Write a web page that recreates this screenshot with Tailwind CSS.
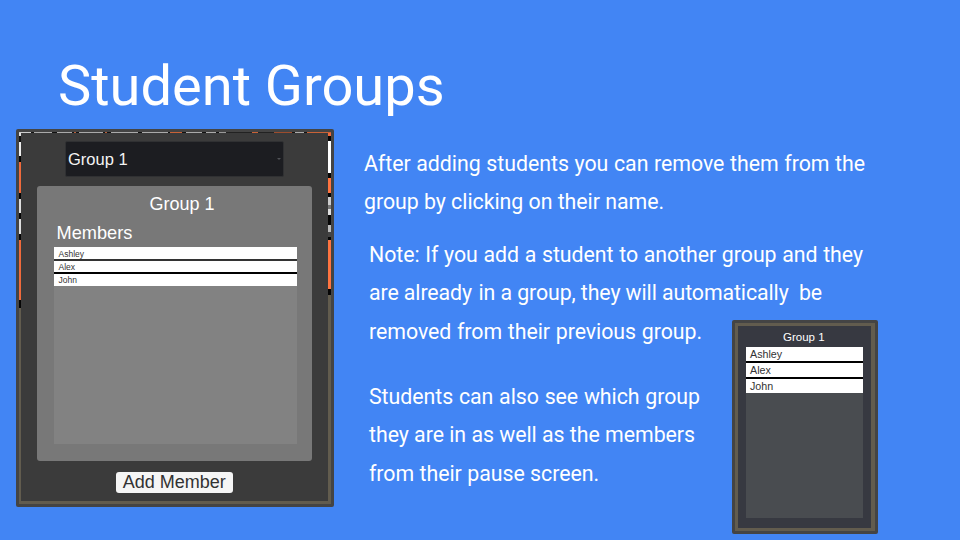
<!DOCTYPE html>
<html lang="en">
<head>
<meta charset="utf-8">
<title>Student Groups</title>
<script src="https://cdn.jsdelivr.net/npm/@tailwindcss/browser@4"></script>
</head>
<body class="h-[540px] w-[960px] overflow-hidden bg-[#4285f4]">
<main class="relative flex h-[540px] w-[960px] flex-col overflow-hidden bg-[#4285f4] font-['Roboto',sans-serif] text-white">
  <h1 class="h-[129px] pt-[53px] pl-[58px] text-[56px] leading-[66px] whitespace-nowrap">Student Groups</h1>
  <div class="flex pl-4">
    <!-- Group editor window -->
    <section class="relative flex h-[378px] w-[318px] shrink-0 flex-col rounded-[2px] bg-[#444444] p-[3px] font-['Liberation_Sans',sans-serif]">
      <div class="h-px bg-[linear-gradient(90deg,#ccc_0_12px,#111_12px_15px,#aaa_15px_33px,#111_33px_38px,#aaa_38px_53px,#111_53px_55px,#b85c38_55px_57px,#111_57px_60px,#aaa_60px_84px,#111_84px_86px,#b85c38_86px_88px,#111_88px_92px,#aaa_92px_119px,#111_119px_123px,#aaa_123px_149px,#111_149px_151px,#c96237_151px_163px,#111_163px_167px,#aaa_167px_183px,#111_183px_187px,#aaa_187px_197px,#111_197px_200px,#999_200px_207px,#222_207px_233px,#c96237_233px_239px,#222_239px_255px,#9c4c2d_255px_273px,#111_273px_276px,#aaa_276px_285px,#111_285px_288px,#c96237_288px_312px)]"></div>
      <div class="flex h-[368px]">
        <div class="w-[2px] bg-[linear-gradient(#ddd_0_3px,#111_3px_9px,#eee_9px_23px,#050505_23px_29px,#f06a3b_29px_60px,#050505_60px_66px,#ddd_66px_80px,#050505_80px_86px,#ddd_86px_101px,#050505_101px_107px,#f06a3b_107px_167px,#050505_167px_175px,#625c4e_175px)]"></div>
        <div class="flex w-[307px] flex-col bg-[#3b3b3b] pt-2">
          <div class="ml-[44px] flex h-[36px] w-[219px] items-center justify-between rounded-[2px] border border-[#303133] bg-[#1c1d21] pr-[2px] pl-[2px] text-[16.5px] text-[#f4f4f4]">
            <span>Group 1</span>
            <svg class="h-[2px] w-[4px]" viewBox="0 0 4 2"><path d="M0 0h4L2 2z" fill="#505257"/></svg>
          </div>
          <div class="mt-[9px] ml-[16px] flex h-[275px] w-[275px] flex-col rounded-[3px] bg-[#787878] px-[17px] pt-[7px]">
            <h2 class="h-[23px] pl-[15px] text-center text-[18px] leading-[23px]">Group 1</h2>
            <h3 class="mt-[6px] h-[25px] pl-[2.5px] text-[18.2px] leading-[23px]">Members</h3>
            <ul class="h-[197px] w-[243px] bg-[#828282] text-[8.5px] text-[#333333]">
              <li class="flex h-[13px] items-center border-b border-[#333] bg-white pt-[2px] pl-[4.5px]">Ashley</li>
              <li class="flex h-[14px] items-center border-t border-b-2 border-t-[#333] border-b-black bg-white pt-[2px] pl-[4.5px]">Alex</li>
              <li class="flex h-[12px] items-center bg-white pl-[4.5px]">John</li>
            </ul>
          </div>
          <button class="mt-[11px] ml-[94.5px] h-[21px] w-[117.5px] rounded-[3px] bg-[#f5f5f5] text-[18px] leading-[21px] whitespace-nowrap text-[#323232]">Add Member</button>
        </div>
        <div class="w-[3px] bg-[linear-gradient(#f06a3b_0_3px,#050505_3px_8px,#fff_8px_40px,#050505_40px_45px,#ff7440_45px_60px,#050505_60px_64px,#ccc_64px_72px,#777_72px_76px,#ddd_76px_82px,#050505_82px_92px,#bbb_92px_99px,#444_99px_104px,#050505_104px_107px,#ff7440_107px_156px,#050505_156px_162px,#625c4e_162px)]"></div>
      </div>
      <div class="h-[3px] bg-[#625c4e]"></div>
    </section>

    <!-- Explanatory copy -->
    <div class="flex flex-col pt-[16px] pl-[30px] text-[21.33px] leading-[38.4px] tracking-[-0.04px] whitespace-nowrap">
      <p class="flex flex-col">
        <span class="w-[501px] [text-align-last:justify]">After adding students you can remove them from the</span>
        <span class="w-[300px] [text-align-last:justify]">group by clicking on their name.</span>
      </p>
      <p class="mt-[14px] ml-[5px] flex flex-col">
        <span class="w-[494px] [text-align-last:justify]">Note: If you add a student to another group and they</span>
        <span class="flex w-[453px] tracking-[-0.1px]"><span class="w-[109.5px]">are already</span><span>in a group, they will automatically</span><span class="ml-auto">be</span></span>
        <span class="w-[333px] [text-align-last:justify]">removed from their previous group.</span>
      </p>
      <p class="mt-[27px] ml-[5px] flex flex-col">
        <span class="w-[331px] [text-align-last:justify]">Students can also see which group</span>
        <span class="w-[326px] [text-align-last:justify]">they are in as well as the members</span>
        <span class="w-[230px] [text-align-last:justify]">from their pause screen.</span>
      </p>
    </div>
  </div>

  <!-- Pause screen group list, floating over the slide -->
  <aside class="absolute top-[320px] left-[732px] h-[214px] w-[146px] rounded-[2px] bg-[#444444] p-[3px] font-['Liberation_Sans',sans-serif]">
    <div class="h-[208px] w-[140px] bg-[#625c4e] pt-[3px] pr-[4px] pb-[3px] pl-[3px]">
      <div class="flex h-[202px] flex-col bg-[#373941] pr-[8px] pl-[7.5px]">
        <h2 class="h-[21px] pr-[1px] text-center text-[11.5px] leading-[22px]">Group 1</h2>
        <ul class="h-[171px] w-[117px] bg-[#494c50] text-[10.7px] text-[#333333]">
          <li class="flex h-[16px] items-center border-b-2 border-black bg-white pl-[4.5px]">Ashley</li>
          <li class="flex h-[16px] items-center border-b-2 border-black bg-white pl-[4.5px]">Alex</li>
          <li class="flex h-[14px] items-center bg-white pl-[4.5px]">John</li>
        </ul>
      </div>
    </div>
  </aside>
</main>
</body>
</html>
